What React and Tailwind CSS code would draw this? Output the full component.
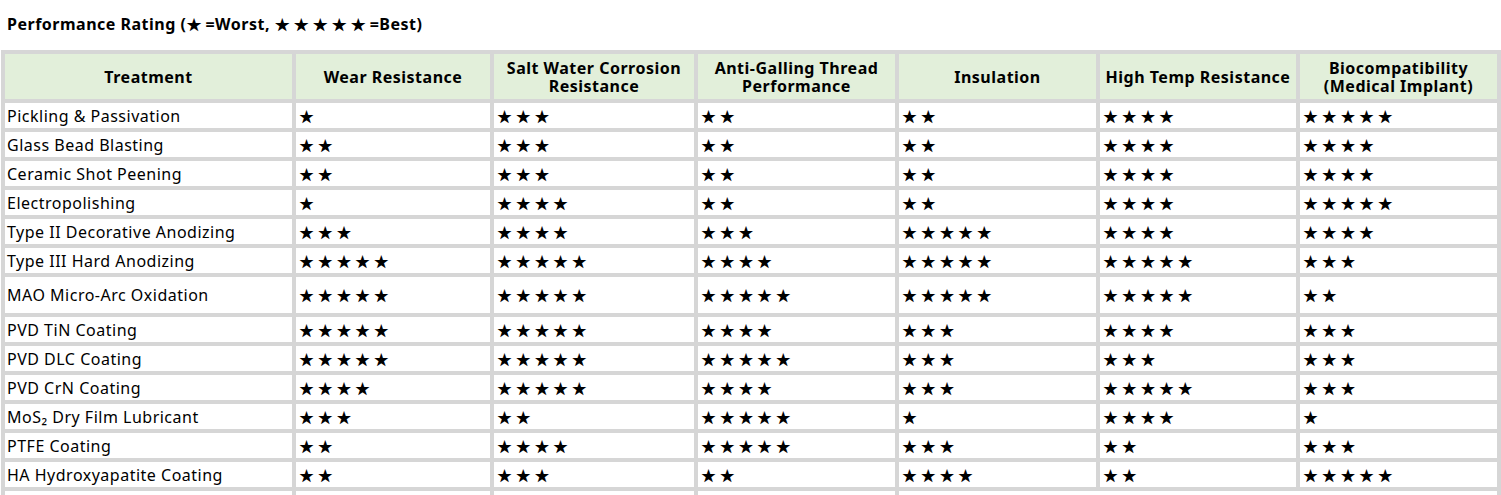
import React from 'react';

const columns = [
  { label: 'Treatment', w: 'w-[287px]' },
  { label: 'Wear Resistance', w: 'w-[194px]' },
  { label: ['Salt Water Corrosion', 'Resistance'], w: 'w-[200px]' },
  { label: ['Anti-Galling Thread', 'Performance'], w: 'w-[197px]' },
  { label: 'Insulation', w: 'w-[197px]' },
  { label: 'High Temp Resistance', w: 'w-[196px]' },
  { label: ['Biocompatibility', '(Medical Implant)'], w: 'w-[197px]' },
];

const rows = [
  { name: 'Pickling & Passivation', r: [1, 3, 2, 2, 4, 5] },
  { name: 'Glass Bead Blasting', r: [2, 3, 2, 2, 4, 4] },
  { name: 'Ceramic Shot Peening', r: [2, 3, 2, 2, 4, 4] },
  { name: 'Electropolishing', r: [1, 4, 2, 2, 4, 5] },
  { name: 'Type II Decorative Anodizing', r: [3, 4, 3, 5, 4, 4] },
  { name: 'Type III Hard Anodizing', r: [5, 5, 4, 5, 5, 3] },
  { name: 'MAO Micro-Arc Oxidation', r: [5, 5, 5, 5, 5, 2], tall: true },
  { name: 'PVD TiN Coating', r: [5, 5, 4, 3, 4, 3] },
  { name: 'PVD DLC Coating', r: [5, 5, 5, 3, 3, 3] },
  { name: 'PVD CrN Coating', r: [4, 5, 4, 3, 5, 3] },
  { name: 'MoS₂ Dry Film Lubricant', r: [3, 2, 5, 1, 4, 1] },
  { name: 'PTFE Coating', r: [2, 4, 5, 3, 2, 3] },
  { name: 'HA Hydroxyapatite Coating', r: [2, 3, 2, 4, 2, 5] },
];

const font = { fontFamily: '"Noto Sans", "Noto Sans CJK SC", sans-serif' };

function Stars({ n, gap = 'tracking-[3.7px]' }) {
  return <span className={`${gap} text-[15px] font-['Noto_Sans_CJK_SC',sans-serif]`}>{'★'.repeat(n)}</span>;
}

export default function App() {
  return (
    <div className="bg-white text-black min-h-screen tracking-[0.5px]" style={font}>
      {/* Title */}
      <div className="h-[50px] pl-[7px] pt-[13px] text-[16px] font-bold leading-[22px]">
        Performance Rating (<Stars n={1} gap="tracking-[4px]" />=Worst, <Stars n={5} gap="tracking-[4px]" />=Best)
      </div>

      <table className="ml-[1px] w-[1500px] table-fixed border-separate border-spacing-[4px] bg-[#d6d6d6] text-[16px]">
        <thead>
          <tr className="h-[45px]">
            {columns.map((c, i) => (
              <th key={i} className={`${c.w} bg-[#e2efda] p-0 pt-[1px] text-center align-middle font-bold leading-[18px]`}>
                {Array.isArray(c.label) ? (
                  <>
                    {c.label[0]}
                    <br />
                    {c.label[1]}
                  </>
                ) : (
                  c.label
                )}
              </th>
            ))}
          </tr>
        </thead>
        <tbody>
          {rows.map((row) => (
            <tr key={row.name} className={row.tall ? 'h-[36px]' : 'h-[25px]'}>
              <td className="bg-white px-[2px] py-0 align-middle leading-[20px]">{row.name}</td>
              {row.r.map((n, i) => (
                <td key={i} className="bg-white px-[3px] py-0 align-middle leading-[20px]">
                  <Stars n={n} />
                </td>
              ))}
            </tr>
          ))}
          <tr className="h-[25px]">
            <td className="bg-white"></td>
            <td className="bg-white"></td>
            <td className="bg-white"></td>
            <td className="bg-white"></td>
            <td className="bg-white" colSpan={3}></td>
          </tr>
        </tbody>
      </table>
    </div>
  );
}
